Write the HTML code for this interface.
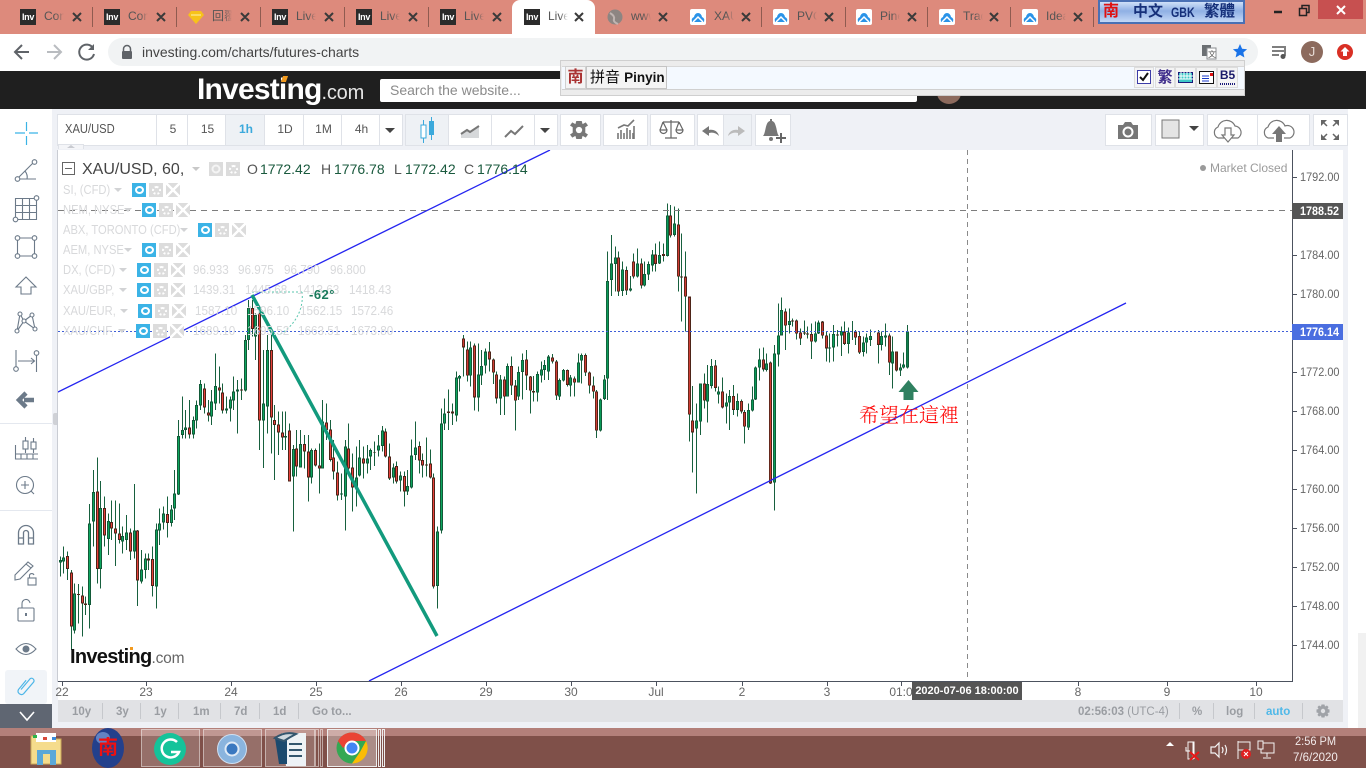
<!DOCTYPE html>
<html lang="en"><head><meta charset="utf-8"><title>XAU/USD chart</title>
<style>
html,body{margin:0;padding:0;background:#fff}
body{width:1366px;height:768px;position:relative;overflow:hidden;font-family:"Liberation Sans","Noto Sans CJK TC",sans-serif}
.a,.a *{box-sizing:border-box}
.a{position:absolute}
.t{position:absolute;white-space:nowrap}
.tabt{position:absolute;top:9px;font-size:12px;line-height:15px;color:#555;width:20px;overflow:hidden;white-space:nowrap;-webkit-mask-image:linear-gradient(90deg,#000 60%,transparent)}
.inv{position:absolute;top:9px;width:16px;height:16px;background:#2b2b2b;color:#fff;font:bold 9px/16px "Liberation Sans",sans-serif;letter-spacing:-.3px;text-align:center}
.cl{position:absolute;top:9px;width:16px;height:16px;background:#fff;border-radius:2px}
.b{position:absolute;top:114px;height:30px;background:#fff;border:1px solid #dfe2e8;font-size:12px;line-height:28px;text-align:center;color:#555}
.lg{position:absolute;font-size:13px;line-height:16px;color:#d8d9db;white-space:nowrap;transform:scaleX(.86);transform-origin:0 50%}
.v{position:absolute;font-size:13px;line-height:16px;color:#d8d9db;white-space:nowrap;transform:scaleX(.9);transform-origin:0 50%}
.ar{position:absolute;width:0;height:0;border-left:4px solid transparent;border-right:4px solid transparent;border-top:4px solid #d2d3d5}
.e,.g,.c{position:absolute;width:14px;height:14px}
.e{background:#3bb3e6}
.e:after{content:"";position:absolute;box-sizing:border-box;left:2.5px;top:3px;width:9px;height:8px;border:2px solid #fff;border-radius:50%}
.g{background:#dcdcdc}
.g:after{content:"";position:absolute;box-sizing:border-box;left:2.5px;top:2.5px;width:9px;height:9px;border:2.5px dotted #fff;border-radius:50%}
.c{background:linear-gradient(45deg,transparent 44%,#fff 44%,#fff 56%,transparent 56%),linear-gradient(-45deg,transparent 44%,#fff 44%,#fff 56%,transparent 56%),#dcdcdc}
.px{position:absolute;left:1300px;font-size:12px;line-height:14px;color:#666;transform:scaleX(.91);transform-origin:0 50%}
.dt{position:absolute;top:685px;font-size:12px;line-height:14px;color:#666;transform:translateX(-50%)}
.bb{position:absolute;top:705px;font-size:11.5px;line-height:14px;color:#9a9da2;font-weight:bold}
.bs{position:absolute;top:703px;width:1px;height:16px;background:#c6c8cc}
.ic{position:absolute}
.tag{position:absolute;left:1292px;width:51px;height:16px;color:#fff;font-size:12px;font-weight:bold;line-height:16px}
.tag span{position:absolute;left:8px;top:0;transform:scaleX(.9);transform-origin:0 50%}
.ohlc{position:absolute;top:161px;font-size:14px;line-height:17px;color:#1a5a3e;white-space:nowrap}
</style></head><body>

<!-- browser tab strip -->
<div class="a" style="left:0;top:0;width:1366px;height:34px;background:#dd8a7c"></div>
<div class="a" style="left:512px;top:0;width:83px;height:34px;background:#fff;border-radius:8px 8px 0 0"></div>

<div class="inv" style="left:20px">Inv</div><div class="tabt" style="left:44px">Con</div>
<div class="inv" style="left:104px">Inv</div><div class="tabt" style="left:128px">Con</div>
<svg class="ic" style="left:188px;top:9px" width="16" height="16"><path d="M3 2H13L16 6 8 15 0 6Z" fill="#f7c21a"/><path d="M3 6H13" stroke="#fff3b0"/></svg><div class="tabt" style="left:212px">回覆</div>
<div class="inv" style="left:272px">Inv</div><div class="tabt" style="left:296px">Live</div>
<div class="inv" style="left:356px">Inv</div><div class="tabt" style="left:380px">Live</div>
<div class="inv" style="left:440px">Inv</div><div class="tabt" style="left:464px">Live</div>
<div class="inv" style="left:524px">Inv</div><div class="tabt" style="left:548px">Live</div>
<svg class="ic" style="left:607px;top:9px" width="16" height="16"><circle cx="8" cy="8" r="7.5" fill="#8d8582"/><path d="M3 4Q8 7 7 10T11 15" stroke="#c0b5b2" stroke-width="2" fill="none"/></svg><div class="tabt" style="left:631px">www</div>
<div class="cl" style="left:690px"><svg width="16" height="16"><path d="M2 13Q1 9 4 8 5 4 8 4 11 4 12 8 15 9 14 13Z" fill="#2a93e8"/><path d="M3 13 8 8 13 13" fill="none" stroke="#fff" stroke-width="1.500"/></svg></div><div class="tabt" style="left:714px">XAU</div>
<div class="cl" style="left:773px"><svg width="16" height="16"><path d="M2 13Q1 9 4 8 5 4 8 4 11 4 12 8 15 9 14 13Z" fill="#2a93e8"/><path d="M3 13 8 8 13 13" fill="none" stroke="#fff" stroke-width="1.500"/></svg></div><div class="tabt" style="left:797px">PVC</div>
<div class="cl" style="left:856px"><svg width="16" height="16"><path d="M2 13Q1 9 4 8 5 4 8 4 11 4 12 8 15 9 14 13Z" fill="#2a93e8"/><path d="M3 13 8 8 13 13" fill="none" stroke="#fff" stroke-width="1.500"/></svg></div><div class="tabt" style="left:880px">Pine</div>
<div class="cl" style="left:939px"><svg width="16" height="16"><path d="M2 13Q1 9 4 8 5 4 8 4 11 4 12 8 15 9 14 13Z" fill="#2a93e8"/><path d="M3 13 8 8 13 13" fill="none" stroke="#fff" stroke-width="1.500"/></svg></div><div class="tabt" style="left:963px">Trad</div>
<div class="cl" style="left:1022px"><svg width="16" height="16"><path d="M2 13Q1 9 4 8 5 4 8 4 11 4 12 8 15 9 14 13Z" fill="#2a93e8"/><path d="M3 13 8 8 13 13" fill="none" stroke="#fff" stroke-width="1.500"/></svg></div><div class="tabt" style="left:1046px">Idea</div>

<svg class="ic" style="left:0;top:0" width="1100" height="34" fill="none" stroke="#3a3a3a" stroke-width="2">
<path d="M73 13l8 8m0-8l-8 8M157 13l8 8m0-8l-8 8M241 13l8 8m0-8l-8 8M325 13l8 8m0-8l-8 8M409 13l8 8m0-8l-8 8M493 13l8 8m0-8l-8 8M575 13l8 8m0-8l-8 8M659 13l8 8m0-8l-8 8M742 13l8 8m0-8l-8 8M825 13l8 8m0-8l-8 8M908 13l8 8m0-8l-8 8M990 13l8 8m0-8l-8 8M1074 13l8 8m0-8l-8 8"/>
<path d="M92.500 7v20M176.500 7v20M260.500 7v20M344.500 7v20M428.500 7v20M761.500 7v20M845.500 7v20M927.500 7v20M1010.500 7v20M1093.500 7v20" stroke="#8f5b50" stroke-width="1"/></svg>

<!-- GBK widget -->
<div class="a" style="left:1098px;top:0;width:147px;height:24px;background:linear-gradient(180deg,#cfe0f8,#8fb0e4 45%,#c4d8f6);border:2px solid #4a70b4"></div>
<div class="t" style="left:1103px;top:3px;font-size:16px;line-height:18px;font-weight:bold;color:#e01010">南</div>
<div class="t" style="left:1133px;top:3px;font-size:15px;line-height:18px;color:#16307a;font-weight:bold">中文</div>
<div class="t" style="left:1171px;top:3px;font-size:14px;line-height:18px;color:#16307a;font-weight:bold;transform:scaleX(.76);transform-origin:0 50%">GBK</div>
<div class="t" style="left:1204px;top:3px;font-size:15.500px;line-height:18px;color:#16307a;font-weight:bold">繁體</div>

<!-- window controls -->
<div class="a" style="left:1318px;top:0;width:45px;height:19px;background:#c75050"></div>
<svg class="ic" style="left:1270px;top:0" width="96" height="20"><path d="M4 12H12" stroke="#222" stroke-width="2.500"/><path d="M29.500 8.500h7v7h-7zM32 8V5.500h7v7H37" fill="none" stroke="#222" stroke-width="1.500"/><path d="M67 6l8 8m0-8l-8 8" stroke="#fff" stroke-width="2"/></svg>

<!-- address row -->
<div class="a" style="left:0;top:34px;width:1366px;height:37px;background:#fff"></div>
<div class="a" style="left:108px;top:38px;width:1150px;height:28px;background:#f1f3f4;border-radius:14px"></div>
<svg class="ic" style="left:12px;top:41px" width="90" height="22" fill="none" stroke-width="2"><path d="M17 11H3M10 4 3 11l7 7" stroke="#5f6368"/><path d="M35 11H49M42 4l7 7-7 7" stroke="#b9bcc0"/><path d="M81 7A7.500 7.500 0 1 0 82 13" stroke="#5f6368"/><path d="M82 3v6h-6z" fill="#5f6368"/></svg>
<svg class="ic" style="left:120px;top:44px" width="14" height="16"><path d="M3.500 7V5a3.500 3.500 0 0 1 7 0v2" fill="none" stroke="#5f6368" stroke-width="1.500"/><rect x="2" y="7" width="10" height="8" rx="1" fill="#5f6368"/></svg>
<div class="t" style="left:142px;top:44px;font-size:14px;line-height:17px;color:#444">investing.com/charts/futures-charts</div>
<svg class="ic" style="left:1200px;top:44px" width="18" height="16"><rect x="2" y="1" width="9" height="11" fill="#6b6f73"/><rect x="7" y="4" width="9" height="11" fill="#fff" stroke="#8a8d90"/><text x="8" y="13" font-size="8" fill="#555" font-family="Liberation Sans,Noto Sans CJK TC,sans-serif">文</text></svg>
<svg class="ic" style="left:1232px;top:43px" width="16" height="16"><path d="M8 1l2.100 4.700 5 .5-3.800 3.300 1.100 5L8 11.900 3.600 14.500l1.100-5L.9 6.200l5-.5z" fill="#1a73e8"/></svg>
<svg class="ic" style="left:1271px;top:44px" width="18" height="16" fill="none" stroke="#555" stroke-width="1.500"><path d="M1 3H13M1 7H13M1 11H8"/><path d="M14 2V12" /><circle cx="12" cy="12.500" r="2.500" fill="#555" stroke="none"/></svg>
<div class="a" style="left:1301px;top:41px;width:22px;height:22px;border-radius:50%;background:#8c6a5d;color:#e8dcd6;font-size:13px;line-height:22px;text-align:center">J</div>
<svg class="ic" style="left:1336px;top:43px" width="18" height="18"><circle cx="9" cy="9" r="8" fill="#d93025"/><path d="M9 4l4.500 4.500H11V13H7V8.500H4.500z" fill="#fff"/></svg>

<!-- site header -->
<div class="a" style="left:0;top:71px;width:1366px;height:38px;background:#1f1f1f"></div>
<div class="t" style="left:197px;top:72px;font-size:30px;line-height:36px;font-weight:bold;color:#fff;letter-spacing:-.8px">Investing<span style="font-size:20px;font-weight:normal;letter-spacing:-.2px;color:#e6e6e6">.com</span></div>
<div class="a" style="left:282px;top:76px;width:5px;height:6px;background:#f29a1e;transform:skewX(-20deg)"></div>
<div class="a" style="left:380px;top:79px;width:537px;height:23px;background:#fff;border-radius:2px"></div>
<div class="t" style="left:390px;top:82px;font-size:14px;line-height:17px;color:#8a8a8a">Search the website...</div>
<div class="a" style="left:937px;top:82px;width:24px;height:22px;border-radius:50%;background:#8c6a5d"></div>

<!-- chart toolbar -->
<div class="a" style="left:52px;top:109px;width:1296px;height:619px;background:#eff1f6"></div>
<div class="a" style="left:0;top:109px;width:52px;height:595px;background:#fff"></div>
<div class="b" style="left:57px;width:100px"></div>
<div class="t" style="left:65px;top:121px;font-size:13px;line-height:16px;color:#555;transform:scaleX(.86);transform-origin:0 50%">XAU/USD</div>
<div class="b" style="left:156px;width:32px">5</div>
<div class="b" style="left:187px;width:39px">15</div>
<div class="b" style="left:225px;width:40px;background:#eef1f5;color:#3ba9dc;font-weight:bold;padding-right:2px">1h</div>
<div class="b" style="left:264px;width:40px;padding-right:2px">1D</div>
<div class="b" style="left:303px;width:39px;padding-right:2px">1M</div>
<div class="b" style="left:341px;width:39px">4h</div>
<div class="b" style="left:379px;width:22px"></div>
<div class="b" style="left:405px;width:44px;background:#eef1f5"></div>
<div class="b" style="left:448px;width:44px"></div>
<div class="b" style="left:491px;width:44px"></div>
<div class="b" style="left:534px;width:22px"></div>
<div class="b" style="left:560px;width:39px"></div>
<div class="b" style="left:603px;width:43px"></div>
<div class="b" style="left:650px;width:43px"></div>
<div class="b" style="left:697px;width:27px"></div>
<div class="b" style="left:723px;width:27px;background:#eef1f5"></div>
<div class="b" style="left:755px;width:34px"></div>
<div class="b" style="left:1105px;width:45px"></div>
<div class="b" style="left:1155px;width:47px"></div>
<div class="b" style="left:1207px;width:51px"></div>
<div class="b" style="left:1257px;width:51px"></div>
<div class="b" style="left:1313px;width:33px"></div>

<svg class="ic" style="left:0;top:109px" width="1366" height="40" fill="none">
<path d="M385 19H395L390 24ZM540 19H550L545 24ZM1189 17H1199L1194 22Z" fill="#444"/>
<path d="M423.500 11V16M423.500 29V34M431.500 8V13M431.500 26V31" stroke="#3ba9dc"/>
<rect x="421" y="16" width="5" height="13" stroke="#3ba9dc" fill="#fff"/><rect x="429" y="12" width="5" height="14" fill="#3ba9dc"/>
<path d="M461 25 467 21 470 23 479 17V29H461Z" fill="#d6d8da"/><path d="M461 25 467 21 470 23 479 17" stroke="#777" stroke-width="2"/>
<path d="M505 28 511 22 515 25 523 17" stroke="#777" stroke-width="2"/>
<g transform="translate(579,21) scale(.9)" fill="#777"><path d="M-3-10H3L4-6.500 7.500-8.500 10-5 7-3V3L10 5 7.500 8.500 4 6.500 3 10H-3L-4 6.500-7.500 8.500-10 5-7 3V-3L-10-5-7.500-8.500-4-6.500Z"/><circle r="3.500" fill="#fff"/></g>
<path d="M618 30V24M621 30V21M624 30V24M627 30V19M630 30V21M633 30V24M634 30V17M618 19 624 16 628 17 634 11" stroke="#777" stroke-width="1.600"/>
<path d="M671 11V29M665 29H677M663 13H679M663 13 660 21M663 13 667 21M679 13 676 21M679 13 683 21M660 21A3.500 3.500 0 0 0 667 21ZM676 21A3.500 3.500 0 0 0 683 21Z" stroke="#666" stroke-width="1.200"/>
<path d="M719 27C718 22 713 20 709 21V17L702 22 709 27V24C713 23 716 24 719 27Z" fill="#777"/>
<path d="M728 27C729 22 734 20 738 21V17L745 22 738 27V24C734 23 731 24 728 27Z" fill="#bbb"/>
<path d="M763 27C766 24 765 13 770 12V10H772V12C777 13 776 24 779 27Z" fill="#777"/><circle cx="771" cy="30" r="2" fill="#777"/><path d="M776 29H786M781 24V34" stroke="#666" stroke-width="2"/>
<path d="M1118 16H1123L1125 13H1131L1133 16H1138V30H1118Z" fill="#777"/><circle cx="1128" cy="23" r="4.500" fill="#777" stroke="#fff" stroke-width="2"/>
<rect x="1162" y="11" width="17" height="18" fill="#e4e4e4" stroke="#777"/>
<path d="M1224 29H1218A6 6 0 0 1 1218 18 9 9 0 0 1 1235 17 6.500 6.500 0 0 1 1238 29H1232M1225 19H1231V26H1234L1228 33 1222 26H1225Z" stroke="#777" stroke-width="1.200"/>
<path d="M1274 29H1268A6 6 0 0 1 1268 18 9 9 0 0 1 1285 17 6.500 6.500 0 0 1 1290 29H1284" stroke="#777" stroke-width="1.200"/><path d="M1276 33V25H1272L1279 17 1286 25H1282V33Z" fill="#777"/>
<path d="M1321 11H1327L1321 17ZM1339 11H1333L1339 17ZM1321 31H1327L1321 25ZM1339 31H1333L1339 25Z" fill="#666"/>
<path d="M1322 12 1327 17M1338 12 1333 17M1322 30 1327 25M1338 30 1333 25" stroke="#666" stroke-width="1.500"/>
<rect x="58.500" y="35.500" width="25" height="6" fill="#f4f5f8" stroke="#dfe2e8"/><path d="M67 39H75L71 36Z" fill="#c8cad0"/>
</svg>

<!-- left toolbar -->
<svg class="ic" style="left:0;top:110px" width="52" height="620" fill="none" stroke="#6c7a89" stroke-width="1.100">
<path d="M15 23H25M29 23H38M26.500 12V21M26.500 26V35" stroke="#3bb3e6" stroke-width="1.200"/>
<path d="M18 68 34 52M18 69H36M25 61Q28 65 27 69"/><circle cx="17.500" cy="69" r="2.300" fill="#fff"/><circle cx="34.500" cy="52" r="2.300" fill="#fff"/>
<path d="M15.500 88.500H36.500V109.500H15.500ZM22.500 88.500V109.500M29.500 88.500V109.500M15.500 95.500H36.500M15.500 102.500H36.500"/><circle cx="36.500" cy="88" r="2.300" fill="#fff"/><circle cx="15.500" cy="109.500" r="2.300" fill="#fff"/>
<path d="M17.500 128H34.500V146H17.500V128"/><circle cx="17.500" cy="128" r="2.300" fill="#fff"/><circle cx="34.500" cy="128" r="2.300" fill="#fff"/><circle cx="17.500" cy="146" r="2.300" fill="#fff"/><circle cx="34.500" cy="146" r="2.300" fill="#fff"/>
<path d="M26 167 36 177H31V184H21V177H16Z"/>
<path d="M17 221 20 204 24 211 32 205 35 219 24 211 17 221"/><circle cx="20" cy="204" r="2" fill="#fff"/><circle cx="32" cy="205" r="2" fill="#fff"/><circle cx="17" cy="221" r="2" fill="#fff"/><circle cx="35" cy="219" r="2" fill="#fff"/><circle cx="24" cy="211" r="2" fill="#fff"/>
<path d="M16 240V258M36.500 243V262M18 251H34M31 248l3.500 3-3.500 3"/><circle cx="16" cy="259" r="2.300" fill="#fff"/><circle cx="36.500" cy="243" r="2.300" fill="#fff"/>
<path d="M34 290H24M26 283 19 290 26 297" stroke="#6c7a89" stroke-width="4.500"/>
<path d="M0 313.500H52M0 400.500H52" stroke="#e4e8ef"/>
<path d="M15.500 335V349H38M15.500 344H38M21 344V349M27 344V349M33 344V349M25.500 327V343M33.500 328V343"/><rect x="23" y="331" width="5" height="8" fill="#fff"/><rect x="31" y="332" width="5" height="7" fill="#fff"/>
<circle cx="25" cy="375" r="8.500"/><path d="M21 375H29M25 371V379M31 381 34 384"/>
<path d="M18.500 434V423A7.500 7.500 0 0 1 33.500 423V434M18.500 428H23.500V434H18.500ZM28.500 428H33.500V434H28.500ZM23.500 428V423A2.500 2.500 0 0 1 28.500 423V428" stroke-width="1.300"/>
<path d="M15 465 28 452 33 456 20 469 15 470ZM26 454 31 458"/><rect x="28" y="468" width="8" height="7"/><path d="M29.500 468V465A2.500 2.500 0 0 1 34 465"/>
<rect x="18" y="498" width="16" height="13" rx="1"/><path d="M22 498V494A4 4 0 0 1 30 493"/><path d="M26 503V506" stroke-width="2"/>
<path d="M16 539Q26 528 36 539 26 550 16 539Z"/><circle cx="26" cy="539" r="3.500" fill="#6c7a89" stroke="none"/>
<rect x="5" y="560" width="42" height="34" rx="3" fill="#f1f4f8" stroke="none"/>
<path transform="translate(4,84) scale(.85)" d="M20 583 31 570A3 3 0 0 1 35 574L23 588A4 4 0 0 1 17 583L26 572" stroke="#4db6e8" stroke-width="1.400"/>
</svg>
<div class="a" style="left:0;top:704px;width:52px;height:24px;background:#5f6672"></div>
<svg class="ic" style="left:18px;top:710px" width="18" height="12"><path d="M2 2 9 10 16 2" fill="none" stroke="#fff" stroke-width="1.600"/></svg>
<div class="a" style="left:53px;top:413px;width:4px;height:12px;background:#cfd1d6;border-radius:2px 0 0 2px"></div>

<!-- chart pane -->
<div class="a" style="left:58px;top:150px;width:1285px;height:550px;background:#fff"></div>

<svg class="ic" style="left:58px;top:150px" width="1234" height="531" viewBox="58 150 1234 531" fill="none">
<defs>
<filter id="er" x="0" y="0" width="1" height="1"><feMorphology operator="erode" radius="1"/></filter>
<g id="gb" stroke-width="9">
<path transform="translate(0,370) scale(.33333)" d="M181 570V578M190 562V575M223 670V782M268 460V705M280 366V455M301 414V597M325 453V507M367 498V515M379 487V510M403 481V545M424 598V634M436 565V600M469 478V650M478 460V482M490 430V458M514 418V459M523 370V416M535 198V374M547 180V195M556 172V180M580 150V194M589 105V152M601 42V107M634 95V140M646 48V100M679 115V122M691 88V115M700 64V92M712 58V65M736 -90V62M745 -186V-90M766 -165V-100M790 100V152M802 -60V110M856 198V203M880 237V320M901 222V292M934 240V323M967 155V296M1024 370V374M1036 230V380M1069 322V355M1078 262V317M1102 265V280M1111 240V260M1135 226V242M1147 182V228M1180 292V322M1201 317V332M1222 348V365M1234 256V352M1246 232V255M1312 484V648M1324 160V482M1333 130V160M1369 22V137"/>
<path transform="translate(430,190) scale(.33333)" d="M88 558V566M121 472V557M145 553V622M154 528V556M166 485V527M211 568V625M232 528V620M265 546V620M277 510V546M322 552V608M334 538V557M343 525V540M355 500V545M388 570V620M400 540V572M421 562V587M445 517V578M454 495V512M511 628V722M523 568V627M532 273V566M544 220V270M556 202V222M577 238V303M601 295V302M622 220V260M643 252V287M655 222V254M667 193V226M688 195V221M712 76V198M733 100V135M799 691V716M811 580V695M832 582V635M844 528V588M865 604V614M889 637V650M898 618V638M922 633V660M955 660V713M967 628V662M976 532V628M988 508V533M1009 520V540M1033 490V878M1045 436V493M1054 360V436M1078 393V405M1156 430V455M1165 398V430M1198 472V475M1210 432V472M1234 423V437M1255 427V462M1300 457V486M1309 442V458M1321 438V450M1354 438V465M1366 436V443M1387 484V520M1411 532V542M1420 523V533M1432 424V533"/>
</g>
<g id="rb" stroke-width="9">
<path transform="translate(0,370) scale(.33333)" d="M202 558V597M214 608V770M235 672V675M247 676V700M256 700V705M292 364V597M313 414V497M334 456V476M346 475V490M358 490V510M391 487V545M412 481V632M445 565V572M457 567V648M502 432V459M568 172V194M613 55V113M625 127V137M658 52V62M667 67V122M724 58V62M757 -186V-123M778 -171V152M814 -60V143M823 150V165M835 163V188M847 187V203M868 181V335M889 235V290M913 222V245M925 245V323M946 240V287M958 287V296M979 157V180M991 178V270M1000 262V305M1012 307V377M1045 235V295M1057 292V352M1090 265V280M1123 246V248M1156 184V260M1168 260V326M1189 288V335M1213 318V365M1258 228V272M1267 270V287M1279 284V287M1291 280V322M1300 322V650M1345 125V129M1357 124V130"/>
<path transform="translate(430,190) scale(.33333)" d="M100 445V472M112 478V557M133 466V622M178 484V508M190 508V548M199 553V625M223 568V620M244 528V587M256 587V632M289 508V556M301 559V602M310 603V607M367 502V515M379 514V617M412 540V585M433 565V578M466 495V548M478 547V587M490 586V605M499 604V722M565 202V305M589 240V302M610 214V260M634 220V287M676 193V222M700 192V198M721 76V137M745 103V260M754 260V262M766 260V320M778 320V674M787 691V727M823 580V632M856 526V594M877 604V652M910 618V660M934 633V664M943 666V710M1000 508V538M1021 517V880M1066 364V407M1087 391V395M1099 391V431M1111 427V446M1123 427V430M1132 431V434M1144 432V455M1177 395V437M1189 436V475M1222 433V437M1243 425V462M1276 425V443M1288 438V488M1345 427V465M1378 436V518M1399 484V542"/>
</g>
</defs>

<!-- wicks -->
<g stroke="#17603e" stroke-width="3" shape-rendering="crispEdges">
<path transform="translate(0,370) scale(.33333)" d="M181 560V620M190 530V610M202 545V630M214 600V840M223 640V790M235 642V760M247 650V800M256 680V735M268 402V775M280 300V530M292 262V640M301 333V655M313 380V530M325 430V555M334 392V510M346 392V588M358 400V520M367 470V550M379 435V540M391 475V570M403 342V565M412 480V708M424 540V640M436 550V625M445 550V600M457 530V680M469 460V716M478 415V525M490 410V478M502 380V503M514 405V470M523 300V450M535 150V375M547 80V205M556 120V205M568 90V205M580 140V205M589 92V175M601 30V120M613 40V130M625 90V155M634 60V165M646 -50V120M658 -10V100M667 40V130M679 80V130M691 80V155M700 20V120M712 30V190M724 25V90M736 -105V65M745 -210V-60M757 -210V-100M766 -171V-30M778 -175V240M790 -60V294M802 -105V190M814 -105V250M823 105V330M835 125V255M847 125V240M856 125V240M868 160V335M880 225V485M889 180V320M901 180V292M913 195V295M925 195V395M934 235V340M946 235V290M958 220V370M967 90V296M979 100V210M991 150V275M1000 210V328M1012 275V392M1024 310V390M1036 210V482M1045 160V300M1057 250V425M1069 230V410M1078 210V320M1090 230V325M1102 225V310M1111 235V300M1123 215V288M1135 195V260M1147 168V245M1156 175V262M1168 220V330M1180 280V340M1189 275V340M1201 305V365M1213 305V410M1222 300V375M1234 208V355M1246 155V270M1258 215V310M1267 250V322M1279 202V320M1291 238V325M1300 310V655M1312 470V716M1324 115V490M1333 85V180M1345 58V180M1357 100V165M1369 5V155"/>
<path transform="translate(430,190) scale(.33333)" d="M88 555V605M100 435V560M112 455V575M121 455V590M133 460V662M145 460V665M154 480V585M166 475V550M178 456V545M190 505V582M199 545V640M211 555V675M223 560V675M232 520V620M244 500V615M256 570V722M265 530V630M277 490V628M289 480V600M301 558V670M310 558V635M322 545V635M334 515V578M343 510V570M355 495V570M367 492V520M379 510V630M388 565V630M400 537V575M412 538V590M421 555V620M433 560V620M445 490V578M454 490V580M466 490V558M478 545V610M490 560V625M499 600V744M511 625V725M523 555V630M532 185V630M544 135V318M556 170V305M565 185V318M577 215V318M589 230V315M601 258V305M610 190V265M622 175V262M634 205V295M643 215V290M655 215V270M667 180V245M676 160V245M688 155V222M700 160V215M712 40V200M721 45V142M733 50V140M745 55V305M754 130V395M766 185V425M778 320V755M787 588V848M799 640V911M811 590V735M823 550V655M832 525V698M844 507V595M856 510V605M865 590V640M877 562V655M889 610V700M898 600V720M910 585V675M922 610V680M934 628V670M943 660V760M955 640V720M967 590V665M976 530V630M988 475V572M1000 472V545M1009 490V545M1021 515V882M1033 465V962M1045 340V530M1054 322V437M1066 355V480M1078 355V430M1087 385V410M1099 388V448M1111 415V465M1123 392V435M1132 410V445M1144 400V507M1156 395V458M1165 392V432M1177 393V445M1189 425V515M1198 430V518M1210 405V515M1222 420V470M1234 410V498M1243 395V465M1255 412V490M1267 393V450M1276 420V465M1288 425V492M1300 440V500M1309 430V490M1321 418V468M1333 425V427M1345 420V520M1354 425V482M1366 400V470M1378 430V555M1387 440V596M1399 484V545M1411 520V558M1420 487V535M1432 405V535"/>
</g>
<!-- bodies -->
<use href="#gb" stroke="#125a38" shape-rendering="crispEdges"/>
<use href="#rb" stroke="#4d2418" shape-rendering="crispEdges"/>
<use href="#gb" stroke="#08a65e" filter="url(#er)" shape-rendering="crispEdges"/>
<use href="#rb" stroke="#e8413a" filter="url(#er)" shape-rendering="crispEdges"/>

<!-- levels -->
<path d="M58 210.500H1292" stroke="#7d7d7d" stroke-dasharray="6 5"/>
<path d="M58 331.500H1292" stroke="#3f5fd8" stroke-dasharray="2 2"/>
<path d="M967.500 150V681" stroke="#8a8a8a" stroke-dasharray="5 4"/>
<!-- trend lines -->
<path d="M58 392 550 150M369 681 1126 303" stroke="#2525f0" stroke-width="1.300"/>
<path d="M252 295 437 636" stroke="#129a7d" stroke-width="3.500"/>
<path d="M252 292H302M302 292C304 308 296 325 279 335" stroke="#58c6ad" stroke-dasharray="2 2"/>
<!-- arrow -->
<path d="M908.500 380 918.500 392H913.500V400H903.500V392H898.500Z" fill="#2f8060"/>
</svg>

<!-- axis frame -->
<div class="a" style="left:57px;top:150px;width:1px;height:532px;background:#c9ccd3"></div>
<div class="a" style="left:1292px;top:150px;width:1px;height:532px;background:#4c525e"></div>
<div class="a" style="left:58px;top:681px;width:1235px;height:1px;background:#4c525e"></div>
<svg class="ic" style="left:1292px;top:150px" width="6" height="532" stroke="#4c525e"><path d="M0 27.500H5M0 105.500H5M0 144.500H5M0 222.500H5M0 261.500H5M0 300.500H5M0 339.500H5M0 378.500H5M0 417.500H5M0 456.500H5M0 495.500H5"/></svg>
<svg class="ic" style="left:58px;top:682px" width="1234" height="5" stroke="#4c525e"><path d="M4.500 0V4M88.500 0V4M173.500 0V4M258.500 0V4M343.500 0V4M428.500 0V4M513.500 0V4M598.500 0V4M684.500 0V4M769.500 0V4M843.500 0V4M1020.500 0V4M1109.500 0V4M1198.500 0V4"/></svg>

<!-- price labels -->
<div class="px" style="top:170px">1792.00</div>
<div class="px" style="top:248px">1784.00</div>
<div class="px" style="top:287px">1780.00</div>
<div class="px" style="top:365px">1772.00</div>
<div class="px" style="top:404px">1768.00</div>
<div class="px" style="top:443px">1764.00</div>
<div class="px" style="top:482px">1760.00</div>
<div class="px" style="top:521px">1756.00</div>
<div class="px" style="top:560px">1752.00</div>
<div class="px" style="top:599px">1748.00</div>
<div class="px" style="top:638px">1744.00</div>
<div class="tag" style="top:203px;background:#555"><span>1788.52</span></div>
<div class="tag" style="top:324px;background:#4a6ee0"><span>1776.14</span></div>

<!-- date labels -->
<div class="dt" style="left:62px">22</div><div class="dt" style="left:146px">23</div><div class="dt" style="left:231px">24</div><div class="dt" style="left:316px">25</div><div class="dt" style="left:401px">26</div><div class="dt" style="left:486px">29</div><div class="dt" style="left:571px">30</div><div class="dt" style="left:656px">Jul</div><div class="dt" style="left:742px">2</div><div class="dt" style="left:827px">3</div><div class="dt" style="left:901px">01:0</div><div class="dt" style="left:1078px">8</div><div class="dt" style="left:1167px">9</div><div class="dt" style="left:1256px">10</div>
<div class="a" style="left:912px;top:682px;width:110px;height:18px;background:#555;color:#fff;font-size:11px;font-weight:bold;line-height:18px;text-align:center">2020-07-06 18:00:00</div>

<!-- chart legend -->
<svg class="ic" style="left:62px;top:162px" width="14" height="14"><rect x=".5" y=".5" width="12" height="12" fill="none" stroke="#666"/><path d="M3 6.500H10" stroke="#666"/></svg>
<div class="t" style="left:82px;top:160px;font-size:16px;line-height:19px;color:#444">XAU/USD, 60,</div>
<svg class="ic" style="left:191px;top:166px" width="10" height="6"><path d="M1 1H9L5 5Z" fill="#c8c8c8"/></svg>
<div class="a" style="left:209px;top:162px;width:14px;height:14px;background:#dcdcdc"></div><div class="g" style="left:226px;top:162px"></div>
<svg class="ic" style="left:209px;top:162px" width="14" height="14"><circle cx="7" cy="7" r="3.500" fill="none" stroke="#f4f4f4" stroke-width="2"/></svg>
<div class="ohlc" style="left:247px;color:#555">O</div><div class="ohlc" style="left:260px">1772.42</div>
<div class="ohlc" style="left:321px;color:#555">H</div><div class="ohlc" style="left:334px">1776.78</div>
<div class="ohlc" style="left:394px;color:#555">L</div><div class="ohlc" style="left:405px">1772.42</div>
<div class="ohlc" style="left:464px;color:#555">C</div><div class="ohlc" style="left:477px">1776.14</div>
<div class="t" style="left:1200px;top:161px;font-size:12px;line-height:14px;color:#9a9a9a"><span style="display:inline-block;width:6px;height:6px;border-radius:50%;background:#9a9a9a;margin-right:4px;vertical-align:1px"></span>Market Closed</div>

<div class="lg" style="left:63px;top:182px">SI, (CFD)</div><div class="ar" style="left:114px;top:188px"></div><div class="e" style="left:132px;top:183px"></div><div class="g" style="left:149px;top:183px"></div><div class="c" style="left:166px;top:183px"></div>
<div class="lg" style="left:63px;top:202px">NEM, NYSE</div><div class="ar" style="left:124px;top:208px"></div><div class="e" style="left:142px;top:203px"></div><div class="g" style="left:159px;top:203px"></div><div class="c" style="left:176px;top:203px"></div>
<div class="lg" style="left:63px;top:222px">ABX, TORONTO (CFD)</div><div class="ar" style="left:180px;top:228px"></div><div class="e" style="left:198px;top:223px"></div><div class="g" style="left:215px;top:223px"></div><div class="c" style="left:232px;top:223px"></div>
<div class="lg" style="left:63px;top:242px">AEM, NYSE</div><div class="ar" style="left:124px;top:248px"></div><div class="e" style="left:142px;top:243px"></div><div class="g" style="left:159px;top:243px"></div><div class="c" style="left:176px;top:243px"></div>
<div class="lg" style="left:63px;top:262px">DX, (CFD)</div><div class="ar" style="left:119px;top:268px"></div><div class="e" style="left:137px;top:263px"></div><div class="g" style="left:154px;top:263px"></div><div class="c" style="left:171px;top:263px"></div>
<div class="v" style="left:193px;top:262px">96.933</div><div class="v" style="left:238px;top:262px">96.975</div><div class="v" style="left:284px;top:262px">96.790</div><div class="v" style="left:330px;top:262px">96.800</div>
<div class="lg" style="left:63px;top:282px">XAU/GBP,</div><div class="ar" style="left:119px;top:288px"></div><div class="e" style="left:137px;top:283px"></div><div class="g" style="left:154px;top:283px"></div><div class="c" style="left:171px;top:283px"></div>
<div class="v" style="left:193px;top:282px">1439.31</div><div class="v" style="left:245px;top:282px">1445.68</div><div class="v" style="left:297px;top:282px">1413.63</div><div class="v" style="left:349px;top:282px">1418.43</div>
<div class="lg" style="left:63px;top:303px">XAU/EUR,</div><div class="ar" style="left:120px;top:309px"></div><div class="e" style="left:138px;top:304px"></div><div class="g" style="left:155px;top:304px"></div><div class="c" style="left:172px;top:304px"></div>
<div class="v" style="left:195px;top:303px">1587.10</div><div class="v" style="left:247px;top:303px">1596.10</div><div class="v" style="left:300px;top:303px">1562.15</div><div class="v" style="left:351px;top:303px">1572.46</div>
<div class="lg" style="left:63px;top:323px">XAU/CHF,</div><div class="ar" style="left:118px;top:329px"></div><div class="e" style="left:136px;top:324px"></div><div class="g" style="left:153px;top:324px"></div><div class="c" style="left:170px;top:324px"></div>
<div class="v" style="left:193px;top:323px">1689.10</div><div class="v" style="left:247px;top:323px">1695.52</div><div class="v" style="left:298px;top:323px">1663.51</div><div class="v" style="left:351px;top:323px">1673.80</div>

<div class="t" style="left:309px;top:287px;font-size:13px;line-height:15px;font-weight:bold;color:#1a7a5c;letter-spacing:.5px">-62°</div>
<div class="t" style="left:859px;top:402px;font-size:20px;line-height:24px;color:#ff0000;font-weight:300;font-family:'Noto Serif CJK SC','Noto Sans CJK TC',serif">希望在這裡</div>

<div class="t" style="left:70px;top:645px;font-size:20px;line-height:24px;font-weight:bold;color:#111;letter-spacing:-.7px">Investing<span style="font-size:15.500px;font-weight:normal;color:#666;letter-spacing:-.2px">.com</span></div>
<div class="a" style="left:130px;top:647px;width:3px;height:3px;background:#f29a1e"></div>

<!-- bottom bar -->
<div class="a" style="left:58px;top:700px;width:1285px;height:22px;background:#e1e2e5"></div>
<div class="bb" style="left:72px">10y</div><div class="bs" style="left:102px"></div>
<div class="bb" style="left:116px">3y</div><div class="bs" style="left:140px"></div>
<div class="bb" style="left:154px">1y</div><div class="bs" style="left:178px"></div>
<div class="bb" style="left:193px">1m</div><div class="bs" style="left:220px"></div>
<div class="bb" style="left:234px">7d</div><div class="bs" style="left:259px"></div>
<div class="bb" style="left:273px">1d</div><div class="bs" style="left:298px"></div>
<div class="bb" style="left:312px">Go to...</div>
<div class="bb" style="left:1078px;color:#9a9da2">02:56:03 <span style="font-weight:normal">(UTC-4)</span></div><div class="bs" style="left:1179px"></div>
<div class="bb" style="left:1192px">%</div><div class="bs" style="left:1213px"></div>
<div class="bb" style="left:1226px">log</div><div class="bs" style="left:1254px"></div>
<div class="bb" style="left:1266px;color:#4fb8e8">auto</div><div class="bs" style="left:1302px"></div>
<svg class="ic" style="left:1316px;top:704px" width="14" height="14"><g transform="translate(7,7)" fill="#a0a3a8"><path d="M-1.500-6.500H1.500L2-4.500 4-5.500 5.500-4 4.500-2 6.500-1.500V1.500L4.500 2 5.500 4 4 5.500 2 4.500 1.500 6.500H-1.500L-2 4.500-4 5.500-5.500 4-4.500 2-6.500 1.500V-1.500L-4.500-2-5.500-4-4-5.500-2-4.500Z"/><circle r="2.200" fill="#e1e2e5"/></g></svg>

<!-- right margin -->
<div class="a" style="left:1348px;top:109px;width:18px;height:619px;background:#fff"></div>
<div class="a" style="left:1358px;top:633px;width:8px;height:95px;background:#f1f1f1"></div>

<!-- IME bar -->
<div class="a" style="left:560px;top:60px;width:685px;height:36px;background:#ececec;border:1px solid #cfcfcf"></div>
<div class="a" style="left:562px;top:66px;width:682px;height:24px;background:#f4f9ff;border-top:1px solid #d8d8d8;border-bottom:1px solid #d0d0d0"></div>
<div class="a" style="left:565px;top:66px;width:21px;height:23px;background:#f4f4f4;border:1px solid #d0d0d0;color:#a33;font-size:16px;font-weight:bold;line-height:21px;text-align:center">南</div>
<div class="a" style="left:586px;top:66px;width:81px;height:23px;background:#f4f4f4;border:1px solid #c4c4c4;color:#111;font-size:15px;line-height:21px;padding-left:3px;white-space:nowrap">拼音 <b style="font-size:13.500px">Pinyin</b></div>
<div class="a" style="left:1134px;top:67px;width:20px;height:21px;background:#f4f4f4;border:1px solid #ddd"></div>
<svg class="ic" style="left:1137px;top:70px" width="15" height="15"><rect x=".5" y=".5" width="13" height="13" fill="#fff" stroke="#3c3ca8"/><path d="M3 7 6 10 11 3" fill="none" stroke="#111" stroke-width="2"/></svg>
<div class="a" style="left:1155px;top:67px;width:20px;height:21px;background:#f4f4f4;border:1px solid #ddd;font-size:15px;font-weight:bold;line-height:19px;text-align:center;color:#3c2a8a">繁</div>
<div class="a" style="left:1175px;top:67px;width:21px;height:21px;background:#f4f4f4;border:1px solid #ddd"></div>
<svg class="ic" style="left:1178px;top:72px" width="15" height="11"><rect x=".5" y=".5" width="14" height="10" fill="#3ec8c8" stroke="#1a1a7a"/><path d="M0 4H15M0 7H15M3 0V7M6 0V7M9 0V7M12 0V7" stroke="#fff"/></svg>
<div class="a" style="left:1196px;top:67px;width:21px;height:21px;background:#f4f4f4;border:1px solid #ddd"></div>
<svg class="ic" style="left:1199px;top:71px" width="15" height="13"><rect x=".5" y=".5" width="14" height="12" fill="#fff" stroke="#111"/><path d="M3 5H10M3 7.500H10M3 10H10" stroke="#1a3ac8"/><rect x="11" y="2" width="3" height="3" fill="#e01010"/></svg>
<div class="a" style="left:1217px;top:67px;width:21px;height:21px;background:#f4f4f4;border:1px solid #ddd;font-size:12px;font-weight:bold;line-height:15px;text-align:center;color:#1a1a6a">B5</div>
<svg class="ic" style="left:1220px;top:82px" width="15" height="4"><path d="M0 2H15" stroke="#1a1a7a" stroke-width="2" stroke-dasharray="1 1"/></svg>

<!-- taskbar -->
<div class="a" style="left:0;top:728px;width:1366px;height:8px;background:#b3807a"></div>
<div class="a" style="left:0;top:736px;width:1366px;height:32px;background:#7f5049"></div>
<div class="a" style="left:141px;top:729px;width:59px;height:38px;background:rgba(255,255,255,.18);border:1px solid rgba(255,255,255,.45)"></div>
<div class="a" style="left:203px;top:729px;width:59px;height:38px;background:rgba(255,255,255,.18);border:1px solid rgba(255,255,255,.45)"></div>
<div class="a" style="left:265px;top:729px;width:50px;height:38px;background:rgba(255,255,255,.18);border:1px solid rgba(255,255,255,.45)"></div>
<div class="a" style="left:315px;top:729px;width:4px;height:38px;border:1px solid rgba(255,255,255,.5)"></div>
<div class="a" style="left:320px;top:729px;width:3px;height:38px;border:1px solid rgba(255,255,255,.5)"></div>
<div class="a" style="left:327px;top:729px;width:50px;height:38px;background:rgba(255,255,255,.35);border:1px solid #eee"></div>
<div class="a" style="left:378px;top:729px;width:3px;height:38px;border:1px solid #eee"></div>
<div class="a" style="left:382px;top:729px;width:3px;height:38px;border:1px solid #eee"></div>
<svg class="ic" style="left:0;top:728px" width="400" height="40">
<path d="M31 8H46V11H61V36H31Z" fill="#f5dc8c" stroke="#c9a95a"/><path d="M36 5H56V14H36Z" fill="#fff"/><rect x="33" y="7" width="4" height="3" fill="#2db34a"/><rect x="43" y="9" width="4" height="3" fill="#d84a3a"/><rect x="52" y="9" width="4" height="3" fill="#3a8ad8"/><rect x="37" y="22" width="19" height="4" fill="#5ba8d8"/><path d="M37 37V26H43V37ZM50 37V26H56V37Z" fill="#5ba8d8"/>
<ellipse cx="108" cy="20" rx="16" ry="20" fill="#23408c"/><ellipse cx="103" cy="10" rx="7" ry="6" fill="#7e9ed8" opacity=".7"/>
<circle cx="170" cy="21" r="16" fill="#15c39a"/><path d="M177 14A9 9 0 1 0 179 24H171" fill="none" stroke="#fff" stroke-width="2.500"/>
<circle cx="232" cy="21" r="14.500" fill="#8ab4de"/><circle cx="232" cy="21" r="14.500" fill="none" stroke="#cfe0f2" stroke-width="1"/><circle cx="232" cy="21" r="6.500" fill="#3a78c0" stroke="#dfeaf6" stroke-width="2"/>
<path d="M282 5H306V38H286Z" fill="#eef2f6"/><path d="M275 10H287V36H279Z" fill="#1c4a6e"/><path d="M275 10Q285 3 296 6 290 9 284 13ZM289 16H302M289 22H302M289 28H302" fill="#cfd8de" stroke="#34566e" stroke-width="2"/>
<circle cx="352" cy="20" r="15.500" fill="#34a853"/><path d="M352 4.500A15.500 15.500 0 0 1 366 13L352 13 343 20 338 13A15.500 15.500 0 0 1 352 4.500Z" fill="#ea4335"/><path d="M366 13A15.500 15.500 0 0 1 352 35.500L360 24Z" fill="#fbbc05"/><circle cx="352" cy="20" r="6.500" fill="#4285f4" stroke="#fff" stroke-width="2"/>
</svg>
<div class="t" style="left:98px;top:736px;font-size:20px;line-height:24px;font-weight:bold;color:#ee1111">南</div>
<svg class="ic" style="left:1160px;top:735px" width="120" height="30" fill="none" stroke="#f4f4f4">
<path d="M6 11H14L10 7Z" fill="#fff" stroke="none"/>
<rect x="28" y="7" width="5" height="17"/><path d="M26 12V16H30M30 7H34V24" stroke="#fff"/><path d="M30 17 39 25M39 17 30 25" stroke="#e81818" stroke-width="2"/>
<path d="M51 12H55L59 8V22L55 18H51ZM62 12Q64 15 62 18M65 10Q68 15 65 20" stroke-width="1.200"/>
<path d="M78 6V24M78 7H90V15H78"/><circle cx="86" cy="19" r="5" fill="#e02020" stroke="none"/><path d="M84 17 88 21M88 17 84 21" stroke="#fff"/>
<rect x="101" y="8" width="13" height="10"/><path d="M107 18V22M103 23H111"/><rect x="98" y="6" width="5" height="8" fill="#7f5049"/>
</svg>
<div class="t" style="left:1295px;top:734px;font-size:12px;line-height:15px;color:#f2eaea;transform:scaleX(.92);transform-origin:0 50%">2:56 PM</div>
<div class="t" style="left:1293px;top:750px;font-size:12px;line-height:15px;color:#f2eaea;transform:scaleX(.96);transform-origin:0 50%">7/6/2020</div>

</body></html>
